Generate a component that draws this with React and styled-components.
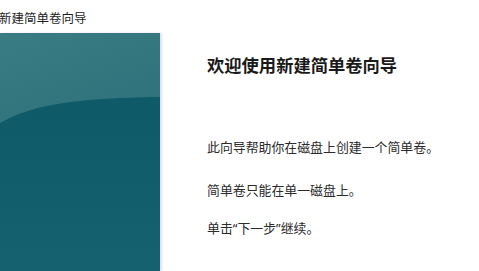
import React from "react";
import styled, { createGlobalStyle } from "styled-components";

const Global = createGlobalStyle`
  html, body { margin: 0; padding: 0; background: #ffffff; overflow: hidden; }
  body { font-family: "Noto Sans CJK SC", "Noto Sans", sans-serif; }
`;

const Page = styled.div`
  width: 479px;
  height: 271px;
  display: flex;
  flex-direction: column;
  background: #ffffff;
  overflow: hidden;
`;

const TitleBar = styled.div`
  height: 33px;
  flex: none;
  display: flex;
  align-items: center;
  margin-left: -1px;
  font-size: 12.5px;
  color: #1e1e1e;
  line-height: 1;
  padding-top: 3px;
  box-sizing: border-box;
`;

const Body = styled.div`
  flex: 1;
  display: flex;
  min-height: 0;
`;

const SidePanel = styled.div`
  width: 160px;
  flex: none;
  background: linear-gradient(160deg, #3a7c83 0%, #30727b 45%, #276974 100%);
  box-shadow: 2px 0 2px rgba(200, 205, 220, 0.6);
  svg { display: block; width: 100%; height: 100%; }
`;

const Content = styled.div`
  flex: 1;
  padding: 20px 0 0 47px;
  display: flex;
  flex-direction: column;
`;

const Heading = styled.h1`
  margin: 0;
  font-size: 17.3px;
  font-weight: 700;
  color: #1a1a1a;
  line-height: 24px;
`;

const Paragraph = styled.p`
  margin: ${(p) => p.$top}px 0 0 0;
  font-family: "Noto Sans", "Noto Sans CJK SC", sans-serif;
  font-size: 12.9px;
  color: #2b2b2b;
  line-height: 18px;
`;

export default function App() {
  return (
    <>
      <Global />
      <Page>
        <TitleBar>新建简单卷向导</TitleBar>
        <Body>
          <SidePanel>
            <svg viewBox="0 0 160 238" preserveAspectRatio="none">
              <defs>
                <linearGradient id="low" x1="0" y1="0" x2="0" y2="1">
                  <stop offset="0" stopColor="#0f5a68" />
                  <stop offset="1" stopColor="#15616f" />
                </linearGradient>
              </defs>
              <path d="M0 90 C 30 73, 70 65, 160 64 L160 238 L0 238 Z" fill="url(#low)" />
            </svg>
          </SidePanel>
          <Content>
            <Heading>欢迎使用新建简单卷向导</Heading>
            <Paragraph $top={61}>此向导帮助你在磁盘上创建一个简单卷。</Paragraph>
            <Paragraph $top={25}>简单卷只能在单一磁盘上。</Paragraph>
            <Paragraph $top={20}>单击“下一步”继续。</Paragraph>
          </Content>
        </Body>
      </Page>
    </>
  );
}
